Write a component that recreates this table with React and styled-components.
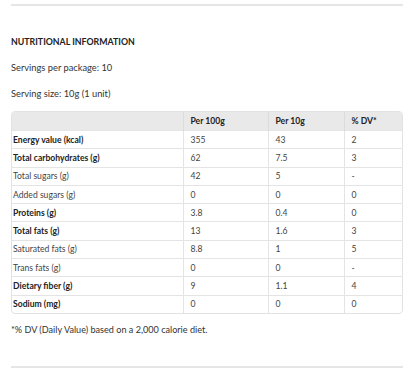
import React from "react";
import styled, { createGlobalStyle } from "styled-components";

const Global = createGlobalStyle`
  html, body { margin: 0; padding: 0; background: #ffffff; }
  body { font-family: Lato, "Noto Sans", sans-serif; color: #333333; }
`;

const Page = styled.div`
  width: 416px;
  height: 374px;
  box-sizing: border-box;
  padding: 4px 13px 0 11px;
  display: flex;
  flex-direction: column;
`;

const Rule = styled.hr`
  margin: 0;
  border: 0;
  height: 2px;
  background: #e6e6e6;
`;

const Section = styled.section`
  display: flex;
  flex-direction: column;
  padding-top: 29px;
`;

const Heading = styled.h2`
  margin: 0;
  font-size: 8.8px;
  font-weight: 700;
  line-height: 14px;
  color: #222;
`;

const Para = styled.p`
  margin: ${(p) => p.$mt || 12}px 0 0;
  font-size: 9.3px;
  line-height: 14px;
  color: #333;
`;

const TableWrap = styled.div`
  margin-top: 10px;
  border: 1px solid #e2e2e2;
  border-radius: 4px;
  overflow: hidden;
`;

const Table = styled.table`
  width: 100%;
  border-collapse: collapse;
  table-layout: fixed;
  font-size: 8.6px;
  color: #333;
`;

const Col = styled.col`
  width: ${(p) => (p.$w ? `${p.$w}px` : "auto")};
`;

const HeadCell = styled.th`
  background: #e9e9e9;
  height: 18px;
  padding: 0 7px;
  text-align: left;
  font-weight: 700;
  color: #222;
  border-left: ${(p) => (p.$first ? "none" : "1px solid #dcdcdc")};
`;

const Row = styled.tr`
  border-top: 1px solid #e4e4e4;
`;

const LabelCell = styled.td`
  height: 17.3px;
  padding: 0 0 0 1px;
  font-weight: ${(p) => (p.$bold ? 700 : 400)};
  color: ${(p) => (p.$bold ? "#222" : "#444")};
  white-space: nowrap;
`;

const ValueCell = styled.td`
  padding: 0 7px;
  border-left: 1px solid #e4e4e4;
  color: #444;
`;

const Note = styled.p`
  margin: 9px 0 0;
  font-size: 9.1px;
  line-height: 14px;
  color: #333;
`;

const BottomRule = styled(Rule)`
  margin-top: 29px;
`;

const rows = [
  ["Energy value (kcal)", "355", "43", "2", true],
  ["Total carbohydrates (g)", "62", "7.5", "3", true],
  ["Total sugars (g)", "42", "5", "-", false],
  ["Added sugars (g)", "0", "0", "0", false],
  ["Proteins (g)", "3.8", "0.4", "0", true],
  ["Total fats (g)", "13", "1.6", "3", true],
  ["Saturated fats (g)", "8.8", "1", "5", false],
  ["Trans fats (g)", "0", "0", "-", false],
  ["Dietary fiber (g)", "9", "1.1", "4", true],
  ["Sodium (mg)", "0", "0", "0", true],
];

export default function App() {
  return (
    <>
      <Global />
      <Page>
        <Rule />
        <Section>
          <Heading>NUTRITIONAL INFORMATION</Heading>
          <Para $mt={12}>Servings per package: 10</Para>
          <Para $mt={12}>Serving size: 10g (1 unit)</Para>
          <TableWrap>
            <Table>
              <colgroup>
                <Col $w={171} />
                <Col $w={85} />
                <Col $w={76} />
                <Col />
              </colgroup>
              <thead>
                <tr>
                  <HeadCell $first />
                  <HeadCell>Per 100g</HeadCell>
                  <HeadCell>Per 10g</HeadCell>
                  <HeadCell>% DV*</HeadCell>
                </tr>
              </thead>
              <tbody>
                {rows.map(([label, a, b, c, bold]) => (
                  <Row key={label}>
                    <LabelCell $bold={bold}>{label}</LabelCell>
                    <ValueCell>{a}</ValueCell>
                    <ValueCell>{b}</ValueCell>
                    <ValueCell>{c}</ValueCell>
                  </Row>
                ))}
              </tbody>
            </Table>
          </TableWrap>
          <Note>*% DV (Daily Value) based on a 2,000 calorie diet.</Note>
        </Section>
        <BottomRule />
      </Page>
    </>
  );
}
